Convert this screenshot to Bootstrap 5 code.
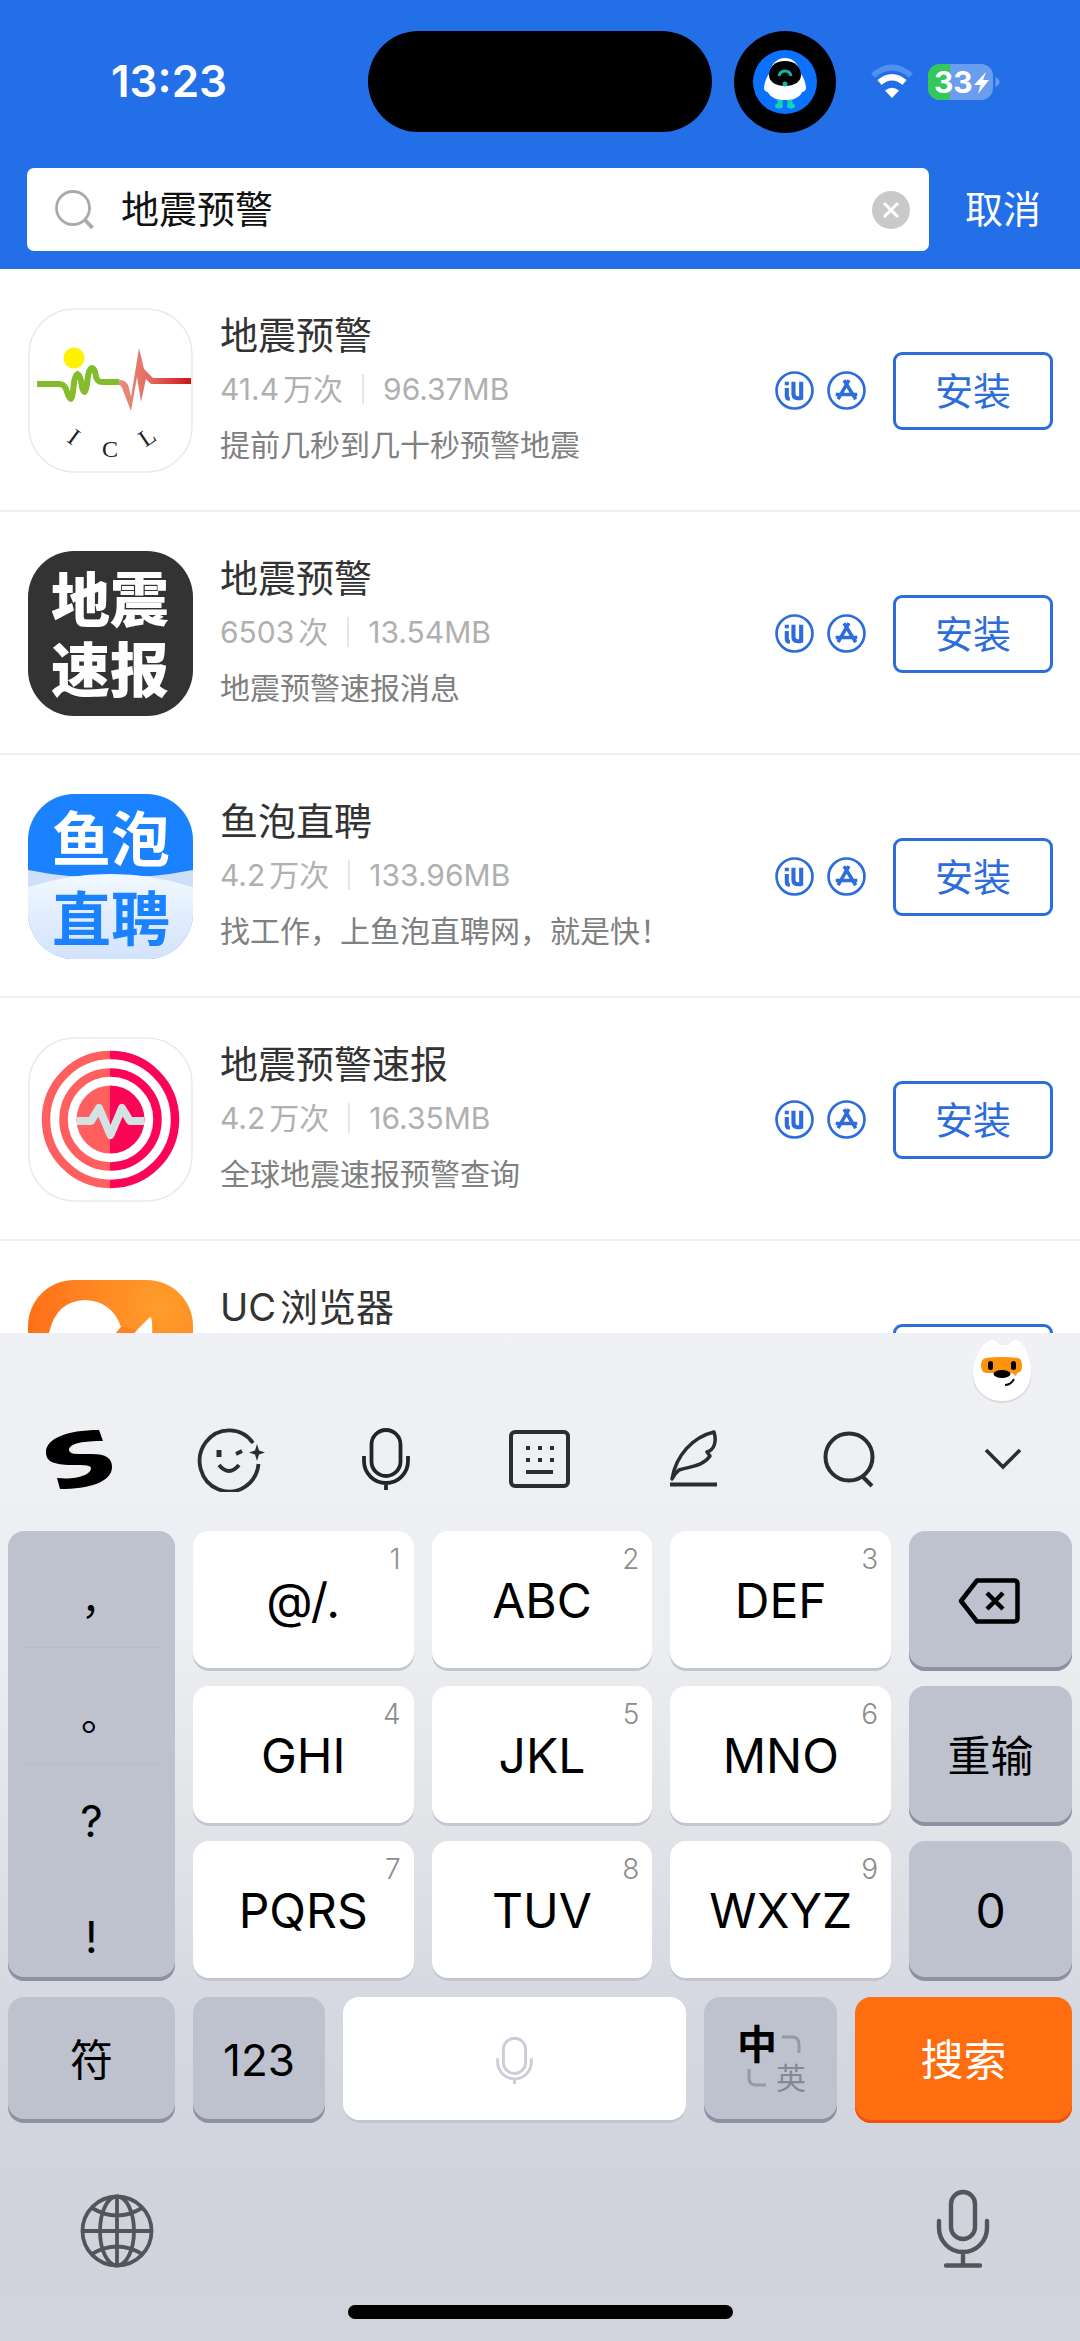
<!DOCTYPE html>
<html lang="zh-CN">
<head>
<meta charset="utf-8">
<meta name="viewport" content="width=device-width, initial-scale=1">
<title>地震预警</title>
<link href="https://cdn.jsdelivr.net/npm/bootstrap@5.3.0/dist/css/bootstrap.min.css" rel="stylesheet">
<style>
  body { font-family: Inter, "Noto Sans CJK SC", sans-serif; color: #333; background: #fff; }
  svg { display: block; flex: none; }
  .topbar { background: #226fe8; padding-bottom: 18px; }
  .status { display: grid; grid-template-columns: 1fr 344px 1fr; column-gap: 22px; padding-top: 31px; height: 168px; align-items: start; }
  .clock { font-size: 44px; font-weight: 600; line-height: 100px; padding-left: 111px; }
  .island { height: 101px; border-radius: 51px; background: #000; }
  .indicators { height: 101px; }
  .search-form { padding: 0 27px; }
  .search-box { height: 83px; border-radius: 7px; padding: 0 19px 0 27px; }
  .search-box input { font-size: 38px; color: #111; padding: 0 0 0 25px; box-shadow: none; }
  .search-box input:focus { box-shadow: none; }
  .cancel { font-size: 38px; line-height: 83px; padding: 0 12px 0 36px; color: #fff; }
  .results { min-height: 0; }
  .result { padding: 38px 27px 36px 28px; border-bottom: 2px solid #eee; height: 243px; flex: none; }
  .logo { width: 165px; height: 165px; border-radius: 46px; overflow: hidden; }
  .info { padding-left: 27px; }
  .app-name { font-size: 38px; line-height: 52px; font-weight: 400; margin: 0; color: #333; }
  .app-meta { font-size: 30px; line-height: 56px; color: #b0b0b0; }
  .app-meta .sep { width: 2px; height: 30px; background: #e6e6e6; margin: 0 19px; }
  .app-desc { font-size: 30px; line-height: 56px; color: #808080; }
  .kinds { gap: 13px; margin-right: 27px; }
  .install { width: 160px; height: 78px; border: 3px solid #2c6cdb; border-radius: 9px; color: #2c6cdb; font-size: 38px; padding: 0; line-height: 72px; }
  .keyboard { background: linear-gradient(#eff1f5 0%, #eceef2 30%, #e3e4e8 48%, #d6d9e1 66%, #d0d3dc 85%, #d1d4dc 100%); padding: 0 8px; flex: none; position: relative; }
  .mascot { position: absolute; right: 47px; top: 5px; }
  .tools { margin: 0 -8px; padding: 92px 0 38px; height: 198px; }
  .tools button, .foot button { padding: 0; border: 0; }
  .key-grid { display: grid; grid-template-columns: 167fr 221fr 221fr 221fr 163fr; grid-template-rows: repeat(3, 140px); gap: 15px 18px; }
  .bottom-row { display: grid; grid-template-columns: 167fr 132fr 343fr 133fr 217fr; column-gap: 18px; padding-top: 16px; }
  .bottom-row .key { height: 126px; }
  .key { position: relative; border: 0; border-radius: 16px; padding: 0; background: #fff; color: #000; font-size: 48px; font-weight: 400; box-shadow: inset 0 -3px #c3c5d3; display: flex; align-items: center; justify-content: center; }
  .key-gray { background: #bec2cf; box-shadow: inset 0 -4px #8d91a3; }
  .key-go { background: #fe6d10; box-shadow: inset 0 -3px #ef500c; color: #fff; }
  .key-cn { font-size: 43px; }
  .key-num { font-size: 44px; }
  .digit { position: absolute; right: 13px; top: 8px; font-size: 28px; font-weight: 300; line-height: 40px; color: #8c8c8c; }
  .punct { grid-row: span 3; overflow: hidden; display: block; }
  .punct button { display: block; width: 100%; height: 116px; border: 0; background: none; padding: 0; font-size: 44px; line-height: 116px; color: #000; }
  .punct .fullwidth { font-size: 40px; padding: 10px 0 0 19px; line-height: 106px; padding-top: 16px; }
  .punct hr { margin: 0 16px -1px; height: 1px; border: 0; background: #a9adbb; }
  .lang { display: grid; grid-template-columns: 38px 30px; grid-template-rows: 36px 30px; align-items: center; justify-items: center; padding-left: 3px; }
  .lang-main { font-size: 40px; font-weight: 700; line-height: 40px; }
  .lang-alt { font-size: 30px; line-height: 30px; color: #858997; }
  .foot { height: 182px; padding: 66px 82px 0 72px; }
  .home { width: 385px; height: 14px; border-radius: 7px; background: #000; margin: 0 auto 22px; }
</style>
<script src="https://cdn.jsdelivr.net/npm/bootstrap@5.3.0/dist/js/bootstrap.bundle.min.js"></script>
</head>
<body>
<svg width="0" height="0" class="position-absolute" aria-hidden="true">
  <defs>
    <symbol id="iu" viewBox="0 0 38 38">
      <circle cx="19" cy="19" r="17.5" fill="none" stroke="#2c6cdb" stroke-width="2.6"/>
      <path d="M11.500 10.500v3.500M11.500 16.500v8q0 2.500 3 2.500M18 10.500v12q0 4 4 4h3.500M25.500 10.500v17.500" fill="none" stroke="#2c6cdb" stroke-width="4"/>
    </symbol>
    <symbol id="store" viewBox="0 0 38 38">
      <circle cx="19" cy="19" r="17.500" fill="none" stroke="#2c6cdb" stroke-width="2.6"/>
      <path d="M16.600 9l11.400 18.500M21.400 9L10.800 27.500M8.500 22.800h21" fill="none" stroke="#2c6cdb" stroke-width="3.400"/>
    </symbol>
    <symbol id="mic" viewBox="0 0 48 64">
      <rect x="9.500" y="3" width="29" height="46" rx="14.500" fill="none" stroke="currentColor" stroke-width="3.800"/>
      <path d="M2 29v5a22 22 0 0 0 44 0v-5M24 56v7" fill="none" stroke="currentColor" stroke-width="3.800"/>
    </symbol>
  </defs>
</svg>
<div class="d-flex flex-column vh-100 overflow-hidden">
  <header class="topbar text-white">
    <div class="status">
      <div class="clock">13:23</div>
      <div class="island"></div>
      <div class="indicators d-flex align-items-center">
        <svg width="102" height="102" viewBox="0 0 102 102">
          <circle cx="51" cy="51" r="51" fill="#000"/><circle cx="51" cy="51" r="32" fill="#0a72ff"/>
          <path d="M51 27c-8 0-14 6-16 16-3 4-5 10-5 14 0 4 4 3 5 6 4 5 9 6 16 6s12-1 16-6c1-3 5-2 5-6 0-4-2-10-5-14-2-10-8-16-16-16z" fill="#fff"/>
          <path d="M51 30c-10 0-16 6-16 14 0 7 7 11 16 11s16-4 16-11c0-8-6-14-16-14z" fill="#000"/>
          <path d="M45 45q1-5 6-5t6 5" fill="none" stroke="#10b79c" stroke-width="3"/><circle cx="51" cy="53" r="2.500" fill="#10b79c"/>
          <path d="M46 69v5M56 69v5" stroke="#13d3b4" stroke-width="5"/><ellipse cx="45" cy="75" rx="4" ry="2.500" fill="#13d3b4"/><ellipse cx="57" cy="75" rx="4" ry="2.500" fill="#13d3b4"/>
        </svg>
        <svg class="ms-4 me-1" width="64" height="36" viewBox="-10 0 64 36">
          <path d="M3 11.500Q22-4.500 41 11.500" fill="none" stroke="#5290ee" stroke-width="6"/>
          <path d="M9.500 18.500Q22 8 34.500 18.500" fill="none" stroke="#fff" stroke-width="6.500"/>
          <path d="M22 34l-7-7.500q7-5.500 14 0z" fill="#fff"/>
        </svg>
        <svg width="72" height="36" viewBox="0 0 72 36">
          <defs><clipPath id="cell"><rect width="65" height="36" rx="12"/></clipPath></defs>
          <g clip-path="url(#cell)"><rect width="65" height="36" fill="#6b9def"/><rect width="22" height="36" fill="#34c759"/></g>
          <path d="M67.500 13q4 2 4 5t-4 5z" fill="#6b9def"/>
          <text x="6" y="29" font-size="30" font-weight="700" fill="#fff">33</text>
          <path d="M58 8L46 21h6.500L50 30l11-14H55z" fill="#fff"/>
        </svg>
      </div>
    </div>
    <form class="search-form d-flex align-items-center" onsubmit="return false">
      <div class="search-box bg-white flex-grow-1 d-flex align-items-center">
        <svg width="42" height="42" viewBox="0 0 42 42" fill="none" stroke="#aaa"><circle cx="19" cy="19" r="16.500" stroke-width="2.800"/><path d="M31 31l7.500 8" stroke-width="4"/></svg>
        <input id="q" class="form-control border-0 bg-transparent" type="text" value="地震预警" aria-label="搜索">
        <button type="button" class="btn p-0 border-0" aria-label="清除"><svg width="38" height="38" viewBox="0 0 38 38"><circle cx="19" cy="19" r="19" fill="#c9c9c9"/><path d="M12 12l14 14M26 12L12 26" stroke="#fff" stroke-width="3"/></svg></button>
      </div>
      <button type="button" class="btn border-0 cancel">取消</button>
    </form>
  </header>

  <main class="results flex-grow-1 overflow-hidden d-flex flex-column">
    <article class="result d-flex align-items-center">
      <svg class="logo" viewBox="0 0 165 165">
        <defs><linearGradient id="quake"><stop offset="0" stop-color="#e98f82"/><stop offset=".45" stop-color="#e36a5c"/><stop offset="1" stop-color="#cf1616"/></linearGradient></defs>
        <rect x="1" y="1" width="163" height="163" rx="45" fill="#fff" stroke="#e9e9e9" stroke-width="1.500"/>
        <circle cx="46" cy="50" r="10.500" fill="#fff200"/>
        <path d="M9 76h22q5 0 7 5 3 10 4.500 10 2 0 3-12 1-12 4-13 3 1 4 10 1 8 3 8 2-1 3-12 1-11 4-12 3 0 4 6 1 8 6 8h18" fill="none" stroke="#84bd2b" stroke-width="6"/>
        <path d="M92 72q7 0 9 8l2 9 8-49 5 21 9 9h38v6h-40l-5-5-5 23-4-25-6 34-9-23q-1-3-4-3z" fill="url(#quake)"/>
        <g font-family="Liberation Serif" font-size="24" fill="#222" text-anchor="middle"><text transform="translate(46 129) rotate(36)" y="8">I</text><text x="82" y="149">C</text><text transform="translate(119 129) rotate(-34)" y="8">L</text></g>
      </svg>
      <div class="info flex-grow-1">
        <h2 class="app-name">地震预警</h2>
        <div class="app-meta d-flex align-items-center"><span class="me-1">41.4</span><span>万次</span><span class="sep"></span><span>96.37MB</span></div>
        <div class="app-desc">提前几秒到几十秒预警地震</div>
      </div>
      <div class="kinds d-flex"><svg width="39" height="39"><use href="#iu"/></svg><svg width="39" height="39"><use href="#store"/></svg></div>
      <button type="button" class="btn install">安装</button>
    </article>

    <article class="result d-flex align-items-center">
      <svg class="logo" viewBox="0 0 165 165">
        <rect width="165" height="165" fill="#333"/>
        <g font-size="59" font-weight="900" fill="#fff" text-anchor="middle"><text x="82" y="71">地震</text><text x="82" y="141">速报</text></g>
      </svg>
      <div class="info flex-grow-1">
        <h2 class="app-name">地震预警</h2>
        <div class="app-meta d-flex align-items-center"><span class="me-1">6503</span><span>次</span><span class="sep"></span><span>13.54MB</span></div>
        <div class="app-desc">地震预警速报消息</div>
      </div>
      <div class="kinds d-flex"><svg width="39" height="39"><use href="#iu"/></svg><svg width="39" height="39"><use href="#store"/></svg></div>
      <button type="button" class="btn install">安装</button>
    </article>

    <article class="result d-flex align-items-center">
      <svg class="logo" viewBox="0 0 165 165">
        <defs><linearGradient id="foam" x1="0" y1="0" x2="0" y2="1"><stop offset="0" stop-color="#f1f8ff"/><stop offset="1" stop-color="#d3e3fc"/></linearGradient></defs>
        <rect width="165" height="165" fill="#1a82ff"/>
        <path d="M0 76q40 8 82 8t83-8v89H0z" fill="#cfdff9"/>
        <path d="M40 83q42-5 86 0l-40 10z" fill="#e9f3ff"/>
        <path d="M0 93q82-26 165 0v72H0z" fill="url(#foam)"/>
        <g font-size="59" font-weight="700" text-anchor="middle"><text x="83" y="67" fill="#fff">鱼泡</text><text x="83" y="147" fill="#1a82ff">直聘</text></g>
      </svg>
      <div class="info flex-grow-1">
        <h2 class="app-name">鱼泡直聘</h2>
        <div class="app-meta d-flex align-items-center"><span class="me-1">4.2</span><span>万次</span><span class="sep"></span><span>133.96MB</span></div>
        <div class="app-desc">找工作，上鱼泡直聘网，就是快！</div>
      </div>
      <div class="kinds d-flex"><svg width="39" height="39"><use href="#iu"/></svg><svg width="39" height="39"><use href="#store"/></svg></div>
      <button type="button" class="btn install">安装</button>
    </article>

    <article class="result d-flex align-items-center">
      <svg class="logo" viewBox="0 0 165 165">
        <defs><linearGradient id="halves" gradientUnits="userSpaceOnUse" x1="14" x2="151" y1="0" y2="0"><stop offset=".5" stop-color="#ff5f5e"/><stop offset=".5" stop-color="#fd0557"/></linearGradient></defs>
        <rect x="1" y="1" width="163" height="163" rx="45" fill="#fff" stroke="#e9e9e9" stroke-width="1.500"/>
        <g fill="none" stroke="url(#halves)" stroke-width="8.500"><circle cx="82.500" cy="82.500" r="64.500"/><circle cx="82.500" cy="82.500" r="47"/></g>
        <circle cx="82.500" cy="82.500" r="34" fill="url(#halves)"/>
        <path d="M49 84h14l8-13 11.500 27L94 71l8 13h14" fill="none" stroke="#d5e2e4" stroke-width="8" stroke-linejoin="round"/>
      </svg>
      <div class="info flex-grow-1">
        <h2 class="app-name">地震预警速报</h2>
        <div class="app-meta d-flex align-items-center"><span class="me-1">4.2</span><span>万次</span><span class="sep"></span><span>16.35MB</span></div>
        <div class="app-desc">全球地震速报预警查询</div>
      </div>
      <div class="kinds d-flex"><svg width="39" height="39"><use href="#iu"/></svg><svg width="39" height="39"><use href="#store"/></svg></div>
      <button type="button" class="btn install">安装</button>
    </article>

    <article class="result d-flex align-items-center">
      <svg class="logo" viewBox="0 0 165 165">
        <defs><radialGradient id="uc" cx=".8" cy=".15" r=".9"><stop offset="0" stop-color="#ff9e2c"/><stop offset="1" stop-color="#ff6a15"/></radialGradient></defs>
        <rect width="165" height="165" fill="url(#uc)"/>
        <path d="M20 58Q26 21 57 20q27 1 36 27l-6 8h17l18-18q3 0 2 22-8 70-60 70T20 58z" fill="#fff"/>
        <path d="M93 47l-7 8h18l5-5z" fill="#ff8420"/>
      </svg>
      <div class="info flex-grow-1">
        <h2 class="app-name d-flex"><span class="me-1">UC</span><span>浏览器</span></h2>
        <div class="app-meta">&nbsp;</div>
        <div class="app-desc">&nbsp;</div>
      </div>
      <button type="button" class="btn install" aria-label="安装"></button>
    </article>
  </main>

  <section class="keyboard" aria-label="键盘">
    <svg class="mascot" width="62" height="66" viewBox="0 0 62 66">
      <ellipse cx="31" cy="38" rx="29.500" ry="27" fill="#d9dad6"/>
      <path d="M2 34C3 18 12 3 21 2q4 0 7 5h10q3-5 7-5c9 2 14 18 15 32 0 17-12 29-29 29S2 51 2 34z" fill="#fff"/>
      <path d="M15 20q16-2 32 0 4 1 4 7 0 8-5 8l-1 3-4-3H15q-5-1-5-8 0-6 5-7z" fill="#ff920b"/>
      <rect x="17" y="23" width="5" height="9" rx="2.500"/><rect x="40" y="23" width="5" height="9" rx="2.500"/><ellipse cx="31" cy="36" rx="8.500" ry="4"/>
      <path d="M34 47q6 0 9-6" fill="none" stroke="#111" stroke-width="2"/>
    </svg>
    <div class="tools d-flex align-items-center">
      <button type="button" class="btn flex-fill w-100 d-flex justify-content-center" aria-label="搜狗"><svg width="70" height="60" viewBox="0 0 70 60"><path d="M57 1l4 11C42 12 29 14 27 20q-1 5 9 5h14c14 0 20 4 20 13 0 15-23 22-52 22l-3-11c19 2 34-3 34-10q0-3-11-3H26C10 35 4 32 4 23 4 10 24 1 57 1z" fill="#000"/></svg></button>
      <button type="button" class="btn flex-fill w-100 d-flex justify-content-center" aria-label="表情"><svg width="68" height="66" viewBox="0 0 68 66" fill="none" stroke="#2b2d32" stroke-width="3.800"><path d="M56 17A29.500 30.500 0 1 0 61.500 38"/><path d="M22 24v7" stroke-width="5"/><path d="M39 28l6-3"/><path d="M22 39q10 12 20 0"/><path d="M60 18l2 6.500 6 2-6 2-2 6.500-2-6.500-6-2 6-2z" fill="#2b2d32" stroke="none"/></svg></button>
      <button type="button" class="btn text-dark flex-fill w-100 d-flex justify-content-center" aria-label="语音"><svg width="48" height="64"><use href="#mic"/></svg></button>
      <button type="button" class="btn flex-fill w-100 d-flex justify-content-center" aria-label="键盘"><svg width="61" height="58" viewBox="0 0 61 58" fill="none" stroke="#2b2d32" stroke-width="4"><rect x="2" y="2" width="57" height="54" rx="4"/><path d="M17 18h28" stroke-dasharray="4 8"/><path d="M17 30h28" stroke-dasharray="4 8"/><path d="M17 42h27"/></svg></button>
      <button type="button" class="btn flex-fill w-100 d-flex justify-content-center" aria-label="手写"><svg width="50" height="58" viewBox="0 0 50 58" fill="none" stroke="#2b2d32" stroke-width="3.500" stroke-linejoin="round"><path d="M3 49C7 25 24 7 45 2c3 10 0 18-7 20l3 4C34 36 23 36 10 40q-4 3-7 9z"/><path d="M1 54.500h47" stroke-width="4"/></svg></button>
      <button type="button" class="btn flex-fill w-100 d-flex justify-content-center" aria-label="搜索"><svg width="52" height="58" viewBox="0 0 52 58" fill="none" stroke="#2b2d32" stroke-width="4"><circle cx="26" cy="27" r="23.500"/><path d="M39 46l10 10"/></svg></button>
      <button type="button" class="btn flex-fill w-100 d-flex justify-content-center" aria-label="收起"><svg width="38" height="22" viewBox="0 0 38 22" fill="none" stroke="#2b2d32" stroke-width="3.600"><path d="M2 2l17 17L36 2"/></svg></button>
    </div>

    <div class="key-grid">
      <div class="key key-gray punct">
        <button type="button" class="fullwidth">，</button><hr><button type="button" class="fullwidth">。</button><hr><button type="button">?</button><button type="button">!</button>
      </div>
      <button type="button" class="key">@/.<span class="digit">1</span></button>
      <button type="button" class="key">ABC<span class="digit">2</span></button>
      <button type="button" class="key">DEF<span class="digit">3</span></button>
      <button type="button" class="key key-gray" aria-label="删除"><svg width="66" height="46" viewBox="0 0 66 46" fill="none" stroke="#000" stroke-width="4.500" stroke-linejoin="round"><path d="M19 2.500h37q3.500 0 3.500 3.500v34q0 3.500-3.500 3.500H19L3 23z"/><path d="M29 15l16 16M45 15L29 31"/></svg></button>
      <button type="button" class="key">GHI<span class="digit">4</span></button>
      <button type="button" class="key">JKL<span class="digit">5</span></button>
      <button type="button" class="key">MNO<span class="digit">6</span></button>
      <button type="button" class="key key-gray key-cn">重输</button>
      <button type="button" class="key">PQRS<span class="digit">7</span></button>
      <button type="button" class="key">TUV<span class="digit">8</span></button>
      <button type="button" class="key">WXYZ<span class="digit">9</span></button>
      <button type="button" class="key key-gray">0</button>
    </div>
    <div class="bottom-row">
      <button type="button" class="key key-gray key-cn">符</button>
      <button type="button" class="key key-gray key-num">123</button>
      <button type="button" class="key" aria-label="空格"><svg width="37" height="49" color="#cccdd9"><use href="#mic"/></svg></button>
      <button type="button" class="key key-gray"><span class="lang"><span class="lang-main">中</span><svg width="22" height="20" viewBox="0 0 22 20" fill="none" stroke="#9599a7" stroke-width="3"><path d="M2 2h10q7 0 7 7v9"/></svg><svg width="22" height="20" viewBox="0 0 22 20" fill="none" stroke="#9599a7" stroke-width="3"><path d="M20 17H10q-7 0-7-7V1"/></svg><span class="lang-alt">英</span></span></button>
      <button type="button" class="key key-go key-cn">搜索</button>
    </div>
    <div class="foot d-flex justify-content-between align-items-start">
      <button type="button" class="btn" aria-label="切换输入法"><svg width="74" height="80" viewBox="0 0 74 80" fill="none" stroke="#51565b" stroke-width="3.800"><circle cx="37" cy="42" r="34.500"/><ellipse cx="37" cy="42" rx="17" ry="34.500"/><path d="M37 7v70M2 42h70M12 19q25 15 50 0M12 65q25-15 50 0"/></svg></button>
      <button type="button" class="btn" aria-label="听写"><svg width="54" height="80" viewBox="0 0 54 80" fill="none" stroke="#51565b" stroke-width="4.400" stroke-linecap="round"><rect x="15" y="3" width="24" height="47" rx="12"/><path d="M3 32v7a24 24 0 0 0 48 0v-7M27 63v13M10 76.500h34"/></svg></button>
    </div>
    <div class="home"></div>
  </section>
</div>
</body>
</html>
